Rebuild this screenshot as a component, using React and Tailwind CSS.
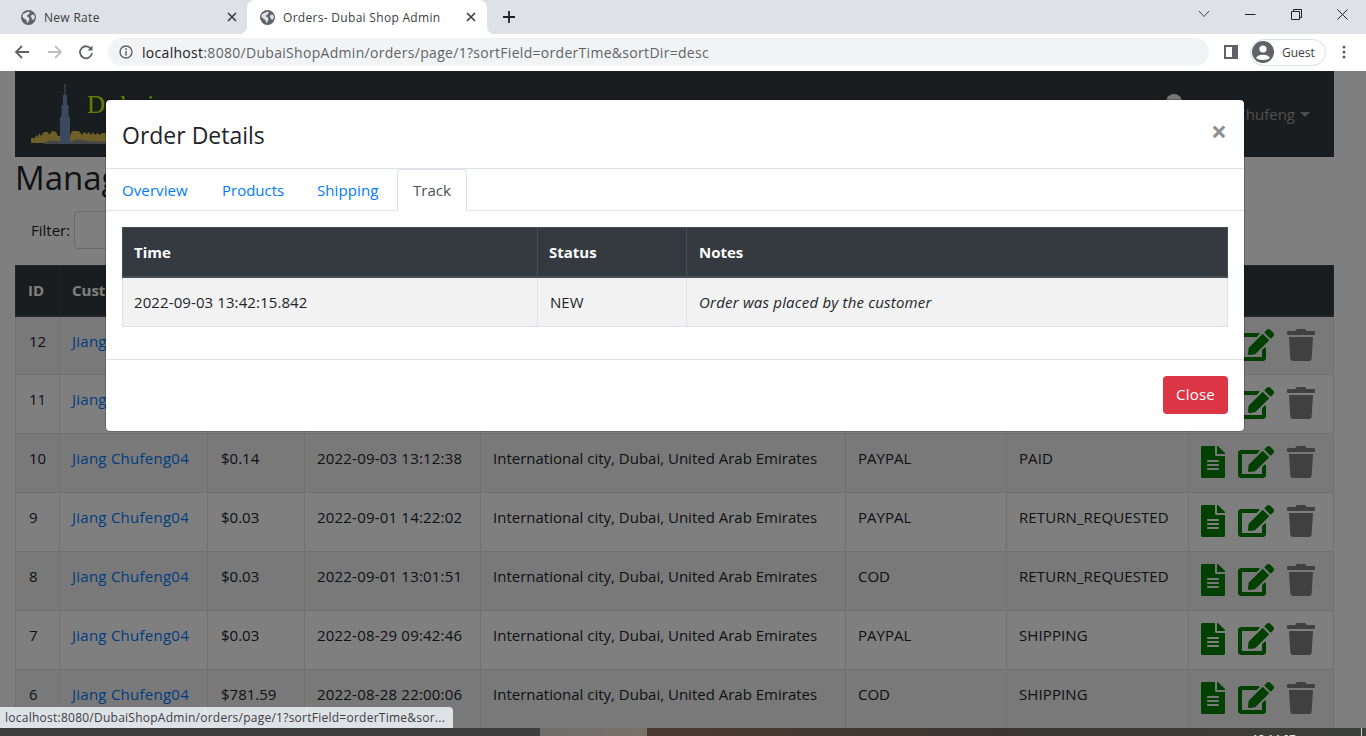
import React from "react";
import { FaFileAlt, FaEdit, FaTrash } from "react-icons/fa";

const rows = [
  { id: 12, odd: true },
  { id: 11, odd: false },
  { id: 10, odd: true, total: "$0.14", time: "2022-09-03 13:12:38", pay: "PAYPAL", status: "PAID" },
  { id: 9, odd: false, total: "$0.03", time: "2022-09-01 14:22:02", pay: "PAYPAL", status: "RETURN_REQUESTED" },
  { id: 8, odd: true, total: "$0.03", time: "2022-09-01 13:01:51", pay: "COD", status: "RETURN_REQUESTED" },
  { id: 7, odd: false, total: "$0.03", time: "2022-08-29 09:42:46", pay: "PAYPAL", status: "SHIPPING" },
  { id: 6, odd: true, total: "$781.59", time: "2022-08-28 22:00:06", pay: "COD", status: "SHIPPING" },
];

function Globe() {
  return (
    <svg width="15" height="15" viewBox="0 0 16 16" className="shrink-0">
      <circle cx="8" cy="8" r="8" fill="#5f6368" />
      <path d="M2 4.5 L5 3 L8 1.5 L9.5 3 L8 5 L6.5 5.5 L6.5 7 L8.5 8 L9 10.5 L7.5 13 L6.5 14 L6 11 L4 9.5 L1.5 7.5 Z" fill="#dee1e6" />
      <path d="M11 5 L14 5 L14.8 8 L13 11 L11.5 9 L10.5 7 Z" fill="#dee1e6" />
    </svg>
  );
}

function TabClose({ color = "#3c4043" }) {
  return (
    <svg width="10" height="10" viewBox="0 0 10 10" className="shrink-0">
      <path d="M1 1 L9 9 M9 1 L1 9" stroke={color} strokeWidth="1.7" />
    </svg>
  );
}

function Logo() {
  return (
    <svg width="80" height="64" viewBox="0 0 80 64" className="shrink-0">
      <path d="M1 61 L1 56 L5 56 L6 53 L8 55 L9 51 L11 54 L14 50 L18 50 L19 53 L22 49 L26 50 L28 54 L30 54 L40 54 L42 49 L48 49 L50 50 L52 53 L54 50 L57 52 L59 50 L61 53 L63 50 L65 53 L67 51 L70 53 L72 51 L80 51 L80 61 Z" fill="#dcbf52" />
      <path d="M14 61 C20 58 26 58 30 60 L40 60 C46 56 52 58 58 59 L80 60 L80 62 L14 62 Z" fill="#8a8a8a" />
      <path d="M30 62 L30 35 L31.5 35 L31.5 23 L33 23 L33 13 L34.4 13 L34.4 2 L35.6 2 L35.6 13 L37 13 L37 23 L38.5 23 L38.5 35 L40 35 L40 62 Z" fill="#7593bb" />
    </svg>
  );
}

const cell = "border border-[#dee2e6] px-[12px] pt-[12px] pb-0 align-top leading-[24px]";

export default function App() {
  const ui = { fontFamily: '"Open Sans", "Liberation Sans", sans-serif' };
  return (
    <div className="relative h-[736px] w-[1366px] overflow-hidden flex flex-col bg-white text-[15px] text-[#212529]" style={ui}>
      {/* tab strip */}
      <div className="h-[34px] bg-[#dee1e6] flex items-end shrink-0 text-[12px] tracking-[0.3px] text-[#3c4043]">
        <div className="w-[247px] h-full flex items-center pl-[21px] pr-[10px]">
          <Globe />
          <span className="ml-2 flex-1 mt-[1px]">New Rate</span>
          <TabClose />
        </div>
        <div className="relative w-[240px] h-full bg-white rounded-t-lg flex items-center pl-[13px] pr-[11px]">
          <div className="absolute left-[-8px] bottom-0 size-[8px] bg-[radial-gradient(circle_at_0_0,#dee1e6_8px,#ffffff_8px)]" />
          <div className="absolute right-[-8px] bottom-0 size-[8px] bg-[radial-gradient(circle_at_100%_0,#dee1e6_8px,#ffffff_8px)]" />
          <Globe />
          <span className="ml-[8px] flex-1 mt-[1px]">Orders- Dubai Shop Admin</span>
          <TabClose />
        </div>
        <svg width="12" height="12" viewBox="0 0 12 12" className="ml-[16px] mb-[11px]">
          <path d="M6 0 V12 M0 6 H12" stroke="#202124" strokeWidth="1.8" />
        </svg>
        <div className="flex-1" />
        <div className="h-full flex items-center">
          <svg width="12" height="8" viewBox="0 0 12 8" className="mr-[35px] mb-[6px]">
            <path d="M1 1 L6 6.5 L11 1" stroke="#3c4043" fill="none" />
          </svg>
          <svg width="11" height="10" viewBox="0 0 11 10" className="mr-[35px] mb-[6px]">
            <path d="M0 5.5 H10.5" stroke="#202124" />
          </svg>
          <svg width="11" height="11" viewBox="0 0 11 11" className="mr-[35px] mb-[6px]">
            <path d="M0.5 2.5 H8.5 V10.5 H0.5 Z M2.5 2.5 V0.5 H10.5 V8.5 H8.5" stroke="#202124" fill="none" />
          </svg>
          <svg width="11" height="11" viewBox="0 0 11 11" className="mr-[18px] mb-[6px]">
            <path d="M0.5 0.5 L10.5 10.5 M10.5 0.5 L0.5 10.5" stroke="#202124" />
          </svg>
        </div>
      </div>

      {/* toolbar */}
      <div className="h-[37px] bg-white flex items-center shrink-0 pb-[1px]">
        <svg width="16" height="16" viewBox="0 0 16 16" className="ml-[14px]">
          <path d="M15 8 H2 M8 2 L2 8 L8 14" stroke="#5f6368" strokeWidth="1.8" fill="none" />
        </svg>
        <svg width="16" height="16" viewBox="0 0 16 16" className="ml-[17px]">
          <path d="M1 8 H14 M8 2 L14 8 L8 14" stroke="#bdc1c6" strokeWidth="1.8" fill="none" />
        </svg>
        <svg width="16" height="16" viewBox="0 0 16 16" className="ml-[15px]">
          <path d="M13.2 5.2 A6 6 0 1 0 14 9" stroke="#5f6368" strokeWidth="1.8" fill="none" />
          <path d="M14.5 1.5 V6.5 H9.5 Z" fill="#5f6368" />
        </svg>
        <div className="ml-[14px] w-[1101px] h-[28px] bg-[#f1f3f4] rounded-full flex items-center pl-[11px]">
          <svg width="14" height="14" viewBox="0 0 14 14" className="shrink-0">
            <circle cx="7" cy="7" r="6" stroke="#5f6368" strokeWidth="1.4" fill="none" />
            <path d="M7 6 V10.5 M7 3.3 V4.9" stroke="#5f6368" strokeWidth="1.5" />
          </svg>
          <span className="ml-[9px] text-[14px] text-[#5f6368] tracking-[0.3px]">
            <span className="text-[#202124]">localhost</span>:8080/DubaiShopAdmin/orders/page/1?sortField=orderTime&amp;sortDir=desc
          </span>
        </div>
        <svg width="14" height="14" viewBox="0 0 14 14" className="ml-[15px]">
          <path d="M0 0 H14 V14 H0 Z M2 2 V12 H8 V2 Z" fill="#5f6368" fillRule="evenodd" />
        </svg>
        <div className="ml-[12px] w-[76px] h-[27px] rounded-full border border-[#dadce0] flex items-center pl-[1px]">
          <svg width="22" height="22" viewBox="0 0 22 22" className="shrink-0">
            <circle cx="11" cy="11" r="11" fill="#5f6368" />
            <circle cx="11" cy="8" r="3.6" fill="#fff" />
            <path d="M4 17 C5.5 12.5 16.5 12.5 18 17 C16 19.5 6 19.5 4 17 Z" fill="#fff" />
          </svg>
          <span className="ml-[8px] mt-[1px] text-[12px] text-[#3c4043]">Guest</span>
        </div>
        <svg width="4" height="14" viewBox="0 0 4 14" className="ml-[16px]">
          <circle cx="2" cy="2" r="1.5" fill="#5f6368" />
          <circle cx="2" cy="7" r="1.5" fill="#5f6368" />
          <circle cx="2" cy="12" r="1.5" fill="#5f6368" />
        </svg>
      </div>

      {/* page */}
      <div className="relative h-[657px] shrink-0 overflow-hidden">
        <div className="w-[1319px] ml-[15px]">
          <div className="h-[86px] bg-[#343a40] flex items-center pl-[15px] pr-[24px]">
            <Logo />
            <span className="ml-[-23px] self-start mt-[14px] text-[25px] tracking-[1.5px] leading-[40px] text-[#bfff00]" style={{ fontFamily: '"Liberation Serif", serif' }}>Dubai</span>
            <div className="flex-1" />
            <div className="size-[16px] rounded-full bg-[#f0f0f0] mb-[24px]" />
            <span className="ml-[17px] text-white/50 mt-[1px]">Jiang Chufeng</span>
            <span className="ml-[5px] mt-[1px] w-0 h-0 border-x-[5px] border-x-transparent border-t-[5px] border-t-white/50" />
          </div>
          <h1 className="text-[33px] leading-[42px] font-medium">Manage Orders</h1>
          <div className="h-[62px] mb-[4px] flex items-center pl-[16px]">
            <span>Filter:</span>
            <div className="ml-[4px] w-[200px] h-[38px] border border-[#ced4da] rounded-[4px]" />
          </div>
          <table className="w-full table-fixed border-collapse">
            <colgroup>
              <col className="w-[44px]" />
              <col className="w-[148px]" />
              <col className="w-[97px]" />
              <col className="w-[176px]" />
              <col className="w-[365px]" />
              <col className="w-[161px]" />
              <col className="w-[182px]" />
              <col />
            </colgroup>
            <thead>
              <tr className="h-[50px] bg-[#343a40] text-white font-bold text-left">
                {["ID", "Customer", "Total", "Order Time", "Destination", "Payment", "Status", ""].map((h, i) => (
                  <th key={i} className="border border-[#454d55] border-b-2 px-[12px] font-bold">{h}</th>
                ))}
              </tr>
            </thead>
            <tbody>
              {rows.map((r) => (
                <tr key={r.id} className={r.odd ? "h-[59px] bg-black/5" : "h-[59px]"}>
                  <td className={cell + " pl-[13px]"}>{r.id}</td>
                  <td className={cell + " text-[#007bff] whitespace-nowrap tracking-[0.25px]"}>Jiang Chufeng04</td>
                  <td className={cell + " pl-[13px]"}>{r.total}</td>
                  <td className={cell + " whitespace-nowrap tracking-[0.2px]"}>{r.time}</td>
                  <td className={cell + " whitespace-nowrap"}>{r.time ? "International city, Dubai, United Arab Emirates" : ""}</td>
                  <td className={cell}>{r.pay}</td>
                  <td className={cell + " tracking-[0.1px]"}>{r.status}</td>
                  <td className="border border-[#dee2e6] pl-[12px] pt-[12px] align-top">
                    <div className="flex items-start h-[32px]">
                      <FaFileAlt className="w-[24px] h-[32px] text-[#008000]" />
                      <FaEdit className="ml-[13px] w-[36px] h-[32px] text-[#008000]" />
                      <FaTrash className="ml-[13px] w-[28px] h-[32px] text-[#808080]" />
                    </div>
                  </td>
                </tr>
              ))}
            </tbody>
          </table>
        </div>

        {/* modal backdrop */}
        <div className="absolute inset-0 bg-black/50">
          <div className="ml-[105px] mt-[28px] w-[1140px] h-[333px] bg-white rounded-[5px] border border-black/20 bg-clip-padding flex flex-col">
            <div className="h-[69px] shrink-0 border-b border-[#dee2e6] flex items-center pl-[16px] pr-[17px]">
              <span className="text-[23px] font-medium flex-1 mt-[2px]">Order Details</span>
              <span className="text-[28px] font-bold leading-none text-[#8f8f8f] mt-[-7px]">×</span>
            </div>
            <div className="h-[42px] shrink-0 border-b border-[#dee2e6] flex items-end text-[#007bff]">
              <span className="h-full flex items-center pt-[2px] pl-[16px] w-[99px] tracking-[0.1px]">Overview</span>
              <span className="h-full flex items-center pt-[2px] pl-[17px] w-[96px]">Products</span>
              <span className="h-full flex items-center pt-[2px] pl-[16px] w-[96px] tracking-[0.1px]">Shipping</span>
              <span className="relative top-[1px] h-[42px] shrink-0 w-[70px] bg-white border border-[#dee2e6] border-b-0 rounded-t-[4px] flex items-center justify-center text-[#495057]">Track</span>
            </div>
            <div className="flex-1 px-[16px] pt-[16px]">
              <table className="w-full table-fixed border-collapse">
                <colgroup>
                  <col className="w-[415px]" />
                  <col className="w-[149px]" />
                  <col />
                </colgroup>
                <thead>
                  <tr className="h-[49px] bg-[#343a40] text-white text-left">
                    <th className="border border-[#454d55] border-b-2 pl-[11px] pr-[12px] font-bold">Time</th>
                    <th className="border border-[#454d55] border-b-2 pl-[11px] pr-[12px] font-bold">Status</th>
                    <th className="border border-[#454d55] border-b-2 px-[12px] font-bold">Notes</th>
                  </tr>
                </thead>
                <tbody>
                  <tr className="h-[50px] bg-[#f2f2f2]">
                    <td className={cell + " pl-[11px] tracking-[0.1px]"}>2022-09-03 13:42:15.842</td>
                    <td className={cell}>NEW</td>
                    <td className={cell + " italic tracking-[0.2px]"}>Order was placed by the customer</td>
                  </tr>
                </tbody>
              </table>
            </div>
            <div className="h-[72px] shrink-0 border-t border-[#dee2e6] flex items-center justify-end pr-[16px] pb-[2px]">
              <span className="w-[65px] h-[38px] rounded-[4px] bg-[#dc3545] text-white flex items-center justify-center tracking-[0.2px]">Close</span>
            </div>
          </div>
        </div>

        {/* link status bubble */}
        <div className="absolute left-0 bottom-0 w-[453px] h-[21px] bg-[#dee1e6] rounded-tr-[4px] flex items-center pl-[5px] pt-[1px] text-[12px] tracking-[0.25px] text-[#3c4043] whitespace-nowrap">
          localhost:8080/DubaiShopAdmin/orders/page/1?sortField=orderTime&amp;sor...
        </div>
      </div>

      {/* desktop strip below the window */}
      <div className="relative h-[8px] shrink-0 flex overflow-hidden">
        <div className="w-[540px] bg-[#3e3e3e]" />
        <div className="w-[107px] bg-gradient-to-r from-[#6d6d68] to-[#7a7268]" />
        <div className="flex-1 bg-gradient-to-r from-[#4a3a30] via-[#3a352f] to-[#3d3f3a]" />
        <span className="absolute left-[1252px] top-[4px] text-[11px] leading-[14px] text-white">12:14:07</span>
        <div className="absolute left-[1361px] top-0 h-full w-px bg-[#d0d0d0]" />
      </div>
    </div>
  );
}
